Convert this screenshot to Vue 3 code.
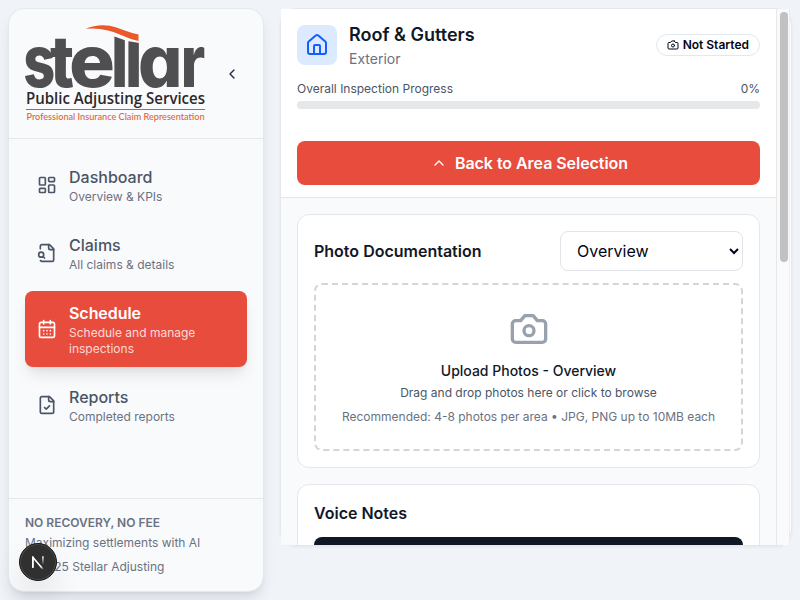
<script setup>
const logoGlyphs = [
  { ch: 's', x: 23.2, w: 32 },
  { ch: 't', x: 50, w: 24 },
  { ch: 'e', x: 69, w: 46 },
  { ch: 'l', x: 111, w: 17.3 },
  { ch: 'l', x: 125, w: 17.3 },
  { ch: 'a', x: 138, w: 44.5 },
  { ch: 'r', x: 180.8, w: 24.5 },
]

const fold = 'M14 2v4a2 2 0 0 0 2 2h4'
const items = [
  {
    title: 'Dashboard',
    sub: 'Overview & KPIs',
    paths: ['M4 3h5a1 1 0 0 1 1 1v7a1 1 0 0 1-1 1H4a1 1 0 0 1-1-1V4a1 1 0 0 1 1-1z', 'M15 3h5a1 1 0 0 1 1 1v3a1 1 0 0 1-1 1h-5a1 1 0 0 1-1-1V4a1 1 0 0 1 1-1z', 'M15 12h5a1 1 0 0 1 1 1v7a1 1 0 0 1-1 1h-5a1 1 0 0 1-1-1v-7a1 1 0 0 1 1-1z', 'M4 16h5a1 1 0 0 1 1 1v3a1 1 0 0 1-1 1H4a1 1 0 0 1-1-1v-3a1 1 0 0 1 1-1z'],
  },
  {
    title: 'Claims',
    sub: 'All claims & details',
    paths: [fold, 'M4.268 21a2 2 0 0 0 1.727 1H18a2 2 0 0 0 2-2V7l-5-5H6a2 2 0 0 0-2 2v3', 'm9 18-1.5-1.5', 'M8 14a3 3 0 1 1-6 0a3 3 0 0 1 6 0z'],
  },
  {
    title: 'Schedule',
    sub: 'Schedule and manage inspections',
    active: true,
    paths: ['M8 2v4', 'M16 2v4', 'M5 4h14a2 2 0 0 1 2 2v14a2 2 0 0 1-2 2H5a2 2 0 0 1-2-2V6a2 2 0 0 1 2-2z', 'M3 10h18', 'M8 14h.01', 'M12 14h.01', 'M16 14h.01', 'M8 18h.01', 'M12 18h.01', 'M16 18h.01'],
  },
  {
    title: 'Reports',
    sub: 'Completed reports',
    paths: ['M15 2H6a2 2 0 0 0-2 2v16a2 2 0 0 0 2 2h12a2 2 0 0 0 2-2V7Z', fold, 'm9 15 2 2 4-4'],
  },
]
const camera = 'M14.5 4h-5L7 7H4a2 2 0 0 0-2 2v9a2 2 0 0 0 2 2h16a2 2 0 0 0 2-2V9a2 2 0 0 0-2-2h-3l-2.5-3z'
</script>

<template>
  <div class="page">
    <aside class="sidebar">
      <header class="brand">
        <svg class="logo" viewBox="25 22 182 102" role="img" aria-label="Stellar Public Adjusting Services">
          <text class="word" y="86.5"><tspan v-for="(g, i) in logoGlyphs" :key="i" :x="g.x" :textLength="g.w" lengthAdjust="spacingAndGlyphs">{{ g.ch }}</tspan></text>
          <path class="mask" d="M113 24H141V43.200L127 41L113 36z" />
          <path class="swoosh" d="M85.800 28.800Q97 23.800 110 25.800Q116 27 124 30.300Q131 33 138.500 34.500V40.900Q130 39.300 121 35Q104 27 85.800 28.800z" />
          <text class="services" x="26" y="104" textLength="179" lengthAdjust="spacingAndGlyphs">Public Adjusting Services</text>
          <rect class="rule" x="26" y="109" width="179" height="1" />
          <text class="tag" x="26.500" y="120" textLength="178" lengthAdjust="spacingAndGlyphs">Professional Insurance Claim Representation</text>
        </svg>
        <button class="collapse" aria-label="Collapse sidebar">
          <svg class="icon" width="16" height="16" viewBox="0 0 24 24"><path d="m15 18-6-6 6-6" /></svg>
        </button>
      </header>
      <nav class="nav">
        <a v-for="item in items" :key="item.title" class="item" :class="{ active: item.active }">
          <svg class="icon" width="20" height="20" viewBox="0 0 24 24"><path v-for="d in item.paths" :key="d" :d="d" /></svg>
          <span class="label"><b>{{ item.title }}</b><small>{{ item.sub }}</small></span>
        </a>
      </nav>
      <footer class="foot">
        <strong>NO RECOVERY, NO FEE</strong>
        <span>Maximizing settlements with AI</span>
        <span class="copy">© 2025 Stellar Adjusting</span>
      </footer>
    </aside>

    <main class="panel">
      <div class="viewport">
        <div class="content">
          <header class="top">
            <div class="heading">
              <div class="tile">
                <svg class="icon" width="24" height="24" viewBox="0 0 24 24"><path d="M15 21v-8a1 1 0 0 0-1-1h-4a1 1 0 0 0-1 1v8" /><path d="M3 10a2 2 0 0 1 .709-1.528l7-5.999a2 2 0 0 1 2.582 0l7 5.999A2 2 0 0 1 21 10v9a2 2 0 0 1-2 2H5a2 2 0 0 1-2-2z" /></svg>
              </div>
              <div class="names">
                <h1>Roof &amp; Gutters</h1>
                <p>Exterior</p>
              </div>
              <span class="badge">
                <svg class="icon" width="12" height="12" viewBox="0 0 24 24"><path :d="camera" /><circle cx="12" cy="13" r="3" /></svg>
                Not Started
              </span>
            </div>
            <div class="progress"><span>Overall Inspection Progress</span><span>0%</span></div>
            <div class="bar"></div>
            <button class="back">
              <svg class="icon" width="16" height="16" viewBox="0 0 24 24"><path d="m18 15-6-6-6 6" /></svg>
              Back to Area Selection
            </button>
          </header>
          <div class="cards">
            <section class="card">
              <div class="card-head">
                <h2>Photo Documentation</h2>
                <select class="picker"><option>Overview</option></select>
              </div>
              <div class="drop">
                <svg class="icon" width="40" height="40" viewBox="0 0 24 24"><path :d="camera" /><circle cx="12" cy="13" r="3" /></svg>
                <p class="d1">Upload Photos - Overview</p>
                <p class="d2">Drag and drop photos here or click to browse</p>
                <p class="d3">Recommended: 4-8 photos per area • JPG, PNG up to 10MB each</p>
              </div>
            </section>
            <section class="card">
              <h2>Voice Notes</h2>
              <div class="record"></div>
            </section>
          </div>
        </div>
        <div class="track"><div class="thumb"></div></div>
      </div>
    </main>

    <div class="dev">
      <svg width="38" height="38" viewBox="0 0 38 38">
        <defs>
          <linearGradient id="fadeA" x1="20" y1="19" x2="25" y2="26" gradientUnits="userSpaceOnUse"><stop stop-color="#fff" /><stop offset=".6" stop-color="#fff" /><stop offset="1" stop-color="#fff" stop-opacity="0" /></linearGradient>
          <linearGradient id="fadeB" x1="24" y1="13" x2="24" y2="22" gradientUnits="userSpaceOnUse"><stop stop-color="#fff" /><stop offset="1" stop-color="#fff" stop-opacity="0" /></linearGradient>
        </defs>
        <path d="M13.800 24.700V14.200L24.300 26.500" fill="none" stroke="url(#fadeA)" stroke-width="1.600" stroke-linejoin="bevel" />
        <path d="M13.800 24.700V13.300" stroke="#fff" stroke-width="1.600" />
        <rect x="23.100" y="13.300" width="1.600" height="9.500" fill="url(#fadeB)" />
      </svg>
    </div>
  </div>
</template>

<style>
body { margin: 0; overflow: hidden; }
</style>

<style scoped>
* { box-sizing: border-box; }
h1, h2, p { margin: 0; }
button { border: 0; padding: 0; font: inherit; }
.page { position: relative; display: flex; align-items: flex-start; gap: 16px; width: 800px; height: 600px; padding: 8px; background: #f0f4f9; font-family: Inter, sans-serif; font-size: 12px; line-height: 16px; overflow: hidden; }
.icon { flex: none; display: block; fill: none; stroke: currentColor; stroke-width: 2; stroke-linecap: round; stroke-linejoin: round; }

.sidebar { display: flex; flex-direction: column; flex: none; width: 256px; height: 584px; border: 1px solid #e5e7eb; border-radius: 16px; background: #f9fafc; box-shadow: 0 10px 15px -3px rgba(15, 23, 42, .1), 0 4px 6px -4px rgba(15, 23, 42, .1); }
.brand { display: flex; align-items: center; height: 130px; padding-left: 16px; border-bottom: 1px solid #e5e7eb; }
.logo { width: 182px; height: 102px; flex: none; margin-bottom: 1px; overflow: visible; }
.word { font: 800 72px Inter, sans-serif; font-feature-settings: "cv11"; fill: #4f4f51; }
.mask { fill: #f9fafc; }
.swoosh { fill: #eb5829; }
.services { font: 600 15.500px "Open Sans", sans-serif; fill: #2b2829; }
.rule { fill: #777; }
.tag { font: 500 9.500px Lato, sans-serif; fill: #dd6338; }
.collapse { display: grid; place-items: center; width: 32px; height: 32px; margin-left: 9px; background: none; color: #1e293b; }
.nav { display: flex; flex-direction: column; gap: 8px; flex: 1; padding: 16px; }
.item { display: flex; align-items: center; gap: 12px; padding: 10px 12px; border-radius: 8px; color: #4a5565; }
.label { display: flex; flex-direction: column; }
.label b { font-weight: 500; font-size: 16px; line-height: 24px; }
.label small { font-size: 12px; color: #6a7282; }
.active { background: #e84c3d; color: #fff; box-shadow: 0 10px 15px -3px rgba(0, 0, 0, .1), 0 4px 6px -4px rgba(0, 0, 0, .1); }
.item.active b { font-weight: 600; letter-spacing: -.05px; }
.item.active small { color: rgba(255, 255, 255, .8); }
.foot { display: flex; flex-direction: column; gap: 4px; padding: 16px; border-top: 1px solid #e5e7eb; color: #6a7282; }
.foot strong { font-weight: 600; }
.copy { margin-top: 4px; }

.panel { flex: none; width: 512px; height: 538px; border: 1px solid #e5e7eb; border-radius: 16px; background: #fff; box-shadow: 0 1px 3px rgba(15, 23, 42, .06); }
.viewport { display: flex; height: 536px; width: 509px; overflow: hidden; }
.content { width: 495px; flex: none; background: #f9fafc; }
.top { padding: 12px 16px; background: #fff; border-bottom: 1px solid #e5e7eb; }
.heading { display: flex; align-items: center; gap: 12px; }
.tile { display: grid; place-items: center; width: 40px; height: 40px; border-radius: 8px; background: #dbeafe; color: #155dfc; }
.names { flex: 1; }
h1 { font-size: 18px; line-height: 28px; font-weight: 600; color: #101828; }
.names p { font-size: 14px; line-height: 20px; color: #6a7282; }
.badge { display: flex; align-items: center; gap: 4px; height: 22px; padding: 0 10px; border: 1px solid #e2e8f0; border-radius: 11px; font-weight: 600; color: #020618; }
.progress { display: flex; justify-content: space-between; margin-top: 12px; color: #4a5565; }
.bar { height: 8px; margin-top: 4px; border-radius: 4px; background: #e5e7eb; }
.back { display: flex; align-items: center; justify-content: center; gap: 8px; width: 100%; height: 44px; margin-top: 32px; border-radius: 8px; background: #e84c3d; color: #fff; font-size: 16px; font-weight: 600; letter-spacing: -.05px; padding-left: 2px; }
.cards { display: flex; flex-direction: column; gap: 16px; padding: 16px; }
.card { padding: 16px; border: 1px solid #e5e7eb; border-radius: 12px; background: #fff; }
.card-head { display: flex; align-items: center; justify-content: space-between; }
h2 { font-size: 16px; line-height: 24px; font-weight: 600; color: #101828; }
.picker { width: 183px; height: 40px; padding: 0 12px; border: 1px solid #e2e4e9; border-radius: 8px; background: #fff; font: 400 16px Inter, sans-serif; color: #020618; }
.drop { display: flex; flex-direction: column; align-items: center; margin-top: 12px; padding: 24px 0; border: 2px dashed #d1d5dc; border-radius: 8px; color: #99a1af; }
.d1 { margin-top: 12px; font-size: 14px; line-height: 20px; font-weight: 500; color: #101828; }
.d2 { margin-top: 4px; color: #4a5565; }
.d3 { margin-top: 8px; color: #6a7282; }
.record { height: 80px; margin-top: 12px; border-radius: 8px; background: #101828; }
.track { width: 14px; flex: none; padding: 3px 2px 0 3px; border-left: 1px solid #e8e8e8; border-right: 1px solid #ededed; background: #fafafa; }
.thumb { width: 8px; height: 250px; border-radius: 4px; background: #c1c1c1; }
.dev { position: absolute; left: 19px; top: 543px; width: 38px; height: 38px; border-radius: 50%; border: 1px solid #171717; background: #303030; box-shadow: inset 0 0 0 1px #4b4b4b, 0 16px 32px -8px rgba(0, 0, 0, .24); }
.dev svg { display: block; margin: -1px; }
</style>
